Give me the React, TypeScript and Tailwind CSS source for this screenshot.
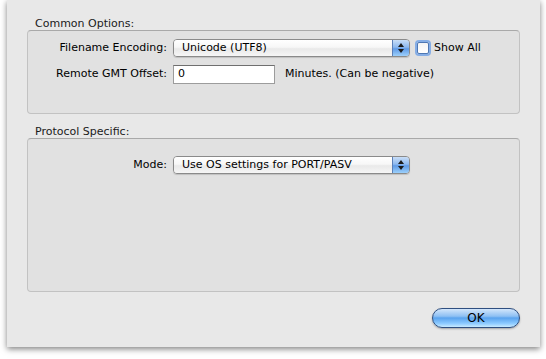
import React from "react";

const font = { fontFamily: '"DejaVu Sans", "Lucida Grande", sans-serif' };

// aqua popup with the blue up/down stepper on the right
const PopUp = ({ value, width }: { value: string; width: string }) => (
  <div
    className={`${width} h-[18px] flex items-stretch rounded-[4px] border border-[#8a8a8a] overflow-hidden shadow-[0_1px_1px_rgba(0,0,0,0.15)]`}
  >
    <div className="flex-1 flex items-center pl-[8px] bg-[linear-gradient(#ffffff,#f7f7f7_45%,#e9e9e9_55%,#f6f6f6)] text-black">
      {value}
    </div>
    <div className="w-[17px] flex flex-col items-center justify-center gap-[2px] border-l border-[#5a7fb8] bg-[linear-gradient(#c9def7,#8cb8ef_45%,#5f9ae6_55%,#9cd0fb)]">
      <div className="w-0 h-0 border-l-[3px] border-r-[3px] border-b-[4px] border-l-transparent border-r-transparent border-b-[#1b1b1b]" />
      <div className="w-0 h-0 border-l-[3px] border-r-[3px] border-t-[4px] border-l-transparent border-r-transparent border-t-[#1b1b1b]" />
    </div>
  </div>
);

const Group = ({ title, h, children }: { title: string; h: string; children: React.ReactNode }) => (
  <div className="flex flex-col">
    <div className="pl-[8px] h-[13px] leading-[13px] text-[#1a1a1a]">{title}</div>
    <div
      className={`${h} rounded-[4px] border border-[#c2c2c2] border-t-[#a9a9a9] bg-[#e1e1e1]`}
    >
      {children}
    </div>
  </div>
);

export default function App() {
  return (
    <div className="w-[546px] h-[359px] bg-white text-[11px]" style={font}>
      <div className="ml-[7px] w-[533px] h-[347px] bg-[#e8e8e8] shadow-[0_2px_6px_rgba(0,0,0,0.5)] pt-[17px] px-[20px] flex flex-col">
        <Group title="Common Options:" h="h-[84px]">
          <div className="pt-[8px] flex flex-col gap-[8px]">
            <div className="flex items-center">
              <div className="w-[145px] text-right pr-[6px]">Filename Encoding:</div>
              <PopUp value="Unicode (UTF8)" width="w-[237px]" />
              <div className="ml-[7px] w-[12px] h-[12px] rounded-[2px] border border-[#4e77b3] bg-[linear-gradient(#f4f4f4,#ffffff)] shadow-[0_0_0_2px_rgba(110,160,230,0.8)]" />
              <div className="ml-[5px]">Show All</div>
            </div>
            <div className="flex items-center">
              <div className="w-[145px] text-right pr-[6px]">Remote GMT Offset:</div>
              <div className="w-[102px] h-[19px] bg-white border border-[#9c9c9c] border-t-[#6f6f6f] flex items-center pl-[4px]">0</div>
              <div className="ml-[10px]">Minutes. (Can be negative)</div>
            </div>
          </div>
        </Group>
        <div className="h-[11px]" />
        <Group title="Protocol Specific:" h="h-[154px]">
          <div className="pt-[17px] flex items-center">
            <div className="w-[145px] text-right pr-[6px]">Mode:</div>
            <PopUp value="Use OS settings for PORT/PASV" width="w-[237px]" />
          </div>
        </Group>
        <div className="flex justify-end mt-[16px]">
          <div className="w-[88px] h-[20px] rounded-full border border-[#2f4f80] bg-[linear-gradient(#d3e6fb,#8ec0f3_40%,#5aa3ee_50%,#8ccaff_80%,#c8eaff)] flex items-center justify-center text-[12px] text-black shadow-[0_1px_2px_rgba(0,0,0,0.3)]">
            OK
          </div>
        </div>
      </div>
    </div>
  );
}
